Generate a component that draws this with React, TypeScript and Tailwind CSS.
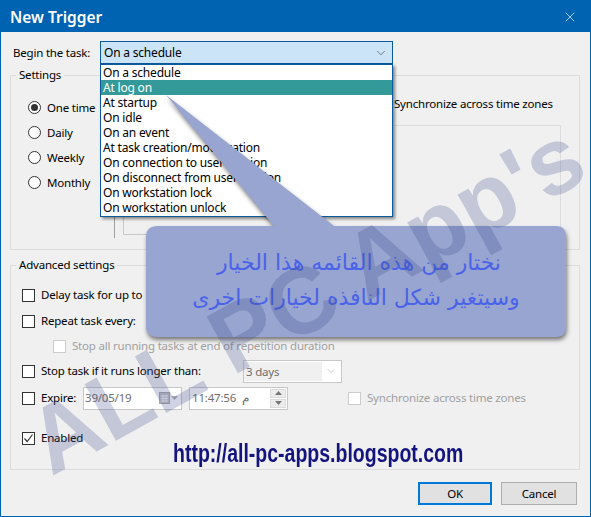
import React from 'react';
import { ChevronDown, X } from 'lucide-react';

const FONT = { fontFamily: '"Noto Sans", sans-serif' };

const TRIGGERS = [
  'On a schedule',
  'At log on',
  'At startup',
  'On idle',
  'On an event',
  'At task creation/modification',
  'On connection to user session',
  'On disconnect from user session',
  'On workstation lock',
  'On workstation unlock',
];

const Radio = ({ label, on }: { label: string; on?: boolean }) => (
  <div className="flex items-center gap-[6px] h-[25px]">
    <span className="w-[13px] h-[13px] rounded-full border border-[#333] bg-white flex items-center justify-center">
      {on && <span className="w-[7px] h-[7px] rounded-full bg-[#333]" />}
    </span>
    <span>{label}</span>
  </div>
);

const Check = ({ label, checked, off, className }: { label: string; checked?: boolean; off?: boolean; className?: string }) => (
  <div className={`flex items-center gap-[6px] ${off ? 'text-[#a0a0a0]' : ''} ${className ?? ''}`}>
    <span className={`w-[13px] h-[13px] border bg-white flex items-center justify-center shrink-0 ${off ? 'border-[#ccc]' : 'border-[#333]'}`}>
      {checked && (
        <svg width="11" height="11" viewBox="0 0 11 11" fill="none" stroke="#333" strokeWidth="1.2">
          <path d="M1.5 5.5 L4.2 8.5 L9.5 1.5" />
        </svg>
      )}
    </span>
    <span className="whitespace-nowrap">{label}</span>
  </div>
);

const Group = ({ title, className, children }: { title: string; className: string; children: React.ReactNode }) => (
  <div className={`relative border border-[#dcdcdc] ${className}`}>
    <span className="absolute left-[5px] -top-[10px] px-[3px] bg-[#f0f0f0] leading-[18px]">{title}</span>
    {children}
  </div>
);

export default function App() {
  return (
    <div style={FONT} className="relative w-[591px] h-[517px] overflow-hidden flex flex-col bg-[#f0f0f0] border border-[#0063b1] text-[11.5px] tracking-[-0.2px] leading-[16px] text-black">
      {/* title bar */}
      <div className="h-[31px] shrink-0 bg-[#0063b1] text-white flex items-center justify-between pl-[9px] pr-[12px]">
        <span className="text-[15.5px] font-semibold tracking-normal">New Trigger</span>
        <X size={16} strokeWidth={1} />
      </div>

      <div className="flex-1 flex flex-col px-[9px] pt-[9px]">
        <div className="flex items-center h-[23px]">
          <span className="w-[90px] pl-[3px]">Begin the task:</span>
          <div className="w-[293px] h-[23px] border border-[#0a5a9c] bg-[#cce4f7] flex items-center justify-between pl-[3px] pr-[4px]">
            <span className="text-[12px]">On a schedule</span>
            <ChevronDown size={14} strokeWidth={1} color="#333" />
          </div>
        </div>

        <Group title="Settings" className="h-[175px] mt-[11px] w-[570px]">
          <div className="flex">
            <div className="w-[383px] pl-[17px] pt-[19px]">
              <Radio label="One time" on />
              <Radio label="Daily" />
              <Radio label="Weekly" />
              <Radio label="Monthly" />
            </div>
            <div className="pt-[20px]">
              <div className="h-[16px] whitespace-nowrap">Synchronize across time zones</div>
            </div>
          </div>
          <div className="absolute left-[112px] top-[49px] w-[438px] h-[125px] border-t border-r border-[#dcdcdc]" />
          <div className="absolute left-[103px] top-[140px] w-px h-[22px] bg-[#a0a0a0]" />
          <div className="absolute left-[112px] top-[140px] w-[40px] h-[19px] border-l border-b border-[#c8c8c8]" />
        </Group>

        <Group title="Advanced settings" className="h-[205px] mt-[15px] w-[570px]">
          <div className="flex flex-col pl-[11px] pt-[19px]">
            <Check label="Delay task for up to" className="h-[20px]" />
            <Check label="Repeat task every:" className="h-[20px] mt-[6px]" />
            <Check label="Stop all running tasks at end of repetition duration" off className="h-[20px] mt-[5px] ml-[31px]" />
            <div className="flex items-center h-[24px] mt-[3px]">
              <Check label="Stop task if it runs longer than:" className="w-[221px]" />
              <div className="w-[99px] h-[23px] border border-[#c8c8c8] bg-white flex items-center text-[#6d6d6d]">
                <span className="w-[78px] h-[19px] bg-[#f0f0f0] pl-[2px] leading-[19px]">3 days</span>
                <ChevronDown size={12} strokeWidth={1} color="#888" className="ml-[3px]" />
              </div>
            </div>
            <div className="flex items-center h-[24px] mt-[3px]">
              <Check label="Expire:" className="w-[61px]" />
              <div className="w-[99px] h-[23px] border border-[#c8c8c8] bg-white flex items-center justify-between text-[#6d6d6d] pl-px pr-[3px]">
                <span>39/05/19</span>
                <span className="flex items-center gap-[1px]">
                  <svg width="11" height="12" viewBox="0 0 11 12" fill="#c4c4c4" stroke="#a8a8a8">
                    <rect x="0.5" y="0.5" width="10" height="11" />
                    <path d="M2 4h7M2 6.5h7M2 9h7M4 3v7M7 3v7" stroke="#f4f4f4" fill="none" />
                  </svg>
                  <svg width="7" height="4" viewBox="0 0 7 4" fill="#b0b0b0"><path d="M0 0h7L3.5 4z" /></svg>
                </span>
              </div>
              <div className="ml-[7px] w-[99px] h-[23px] border border-[#c8c8c8] bg-white flex items-center justify-between text-[#6d6d6d] pl-[2px] pr-px">
                <span className="flex gap-[6px]"><span>11:47:56</span><span dir="rtl">م</span></span>
                <span className="w-[16px] h-[19px] flex flex-col gap-px">
                  <span className="flex-1 bg-[#ececec] border border-[#dcdcdc] flex items-center justify-center">
                    <svg width="7" height="4" viewBox="0 0 7 4" fill="#777"><path d="M0 4h7L3.5 0z" /></svg>
                  </span>
                  <span className="flex-1 bg-[#ececec] border border-[#dcdcdc] flex items-center justify-center">
                    <svg width="7" height="4" viewBox="0 0 7 4" fill="#777"><path d="M0 0h7L3.5 4z" /></svg>
                  </span>
                </span>
              </div>
              <Check label="Synchronize across time zones" off className="ml-[60px]" />
            </div>
            <Check label="Enabled" checked className="h-[20px] mt-[18px]" />
          </div>
        </Group>

        <div className="flex justify-end gap-[9px] mt-[12px] pr-[4px]">
          <button className="w-[74px] h-[23px] bg-[#e1e1e1] border-2 border-[#0078d7]">OK</button>
          <button className="w-[76px] h-[23px] bg-[#e1e1e1] border border-[#adadad]">Cancel</button>
        </div>
      </div>

      {/* open dropdown list */}
      <div className="absolute left-[99px] top-[63px] w-[293px] h-[153px] bg-white border border-[#0a5a9c] shadow-[2px_2px_3px_rgba(0,0,0,0.45)] text-[12px]">
        {TRIGGERS.map((t, i) => (
          <div key={t} className={`h-[15px] leading-[15px] pl-[2px] whitespace-nowrap ${i === 1 ? 'bg-[#339999] text-white' : ''}`}>{t}</div>
        ))}
      </div>

      {/* callout */}
      <svg className="absolute left-0 top-0" width="591" height="517" style={{ filter: 'drop-shadow(1px 3px 2px rgba(0,0,0,0.5))' }}>
        <path d="M165 94 L333 225 L555 225 Q565 225 565 236 L565 325 Q565 336 555 336 L157 336 Q145 336 145 325 L145 236 Q145 225 157 225 L273 225 Z" fill="#97a5d0" />
      </svg>
      <div dir="rtl" className="absolute left-[145px] top-[244px] w-[420px] flex flex-col items-center text-[#4a63e8] text-[22px] leading-[35px] tracking-normal" style={{ fontFamily: '"DejaVu Sans", sans-serif' }}>
        <span className="whitespace-nowrap ml-[6px]">نختار من هذه القائمه هذا الخيار</span>
        <span className="whitespace-nowrap">وسيتغير شكل النافذه لخيارات اخرى</span>
      </div>

      {/* watermark */}
      <div className="absolute left-[-4px] top-[251px] text-[#3b4a8c]/25 font-bold text-[94px] leading-none tracking-normal whitespace-nowrap origin-center -rotate-[29deg] pointer-events-none" style={{ fontFamily: '"Liberation Sans", sans-serif' }}>
        ALL PC App's
      </div>

      <div className="absolute left-[172px] top-[437px] text-[#14147f] font-bold text-[25px] leading-[30px] tracking-normal whitespace-nowrap origin-left scale-x-[0.78]" style={{ fontFamily: '"Liberation Sans", sans-serif' }}>
        http://all-pc-apps.blogspot.com
      </div>
    </div>
  );
}
